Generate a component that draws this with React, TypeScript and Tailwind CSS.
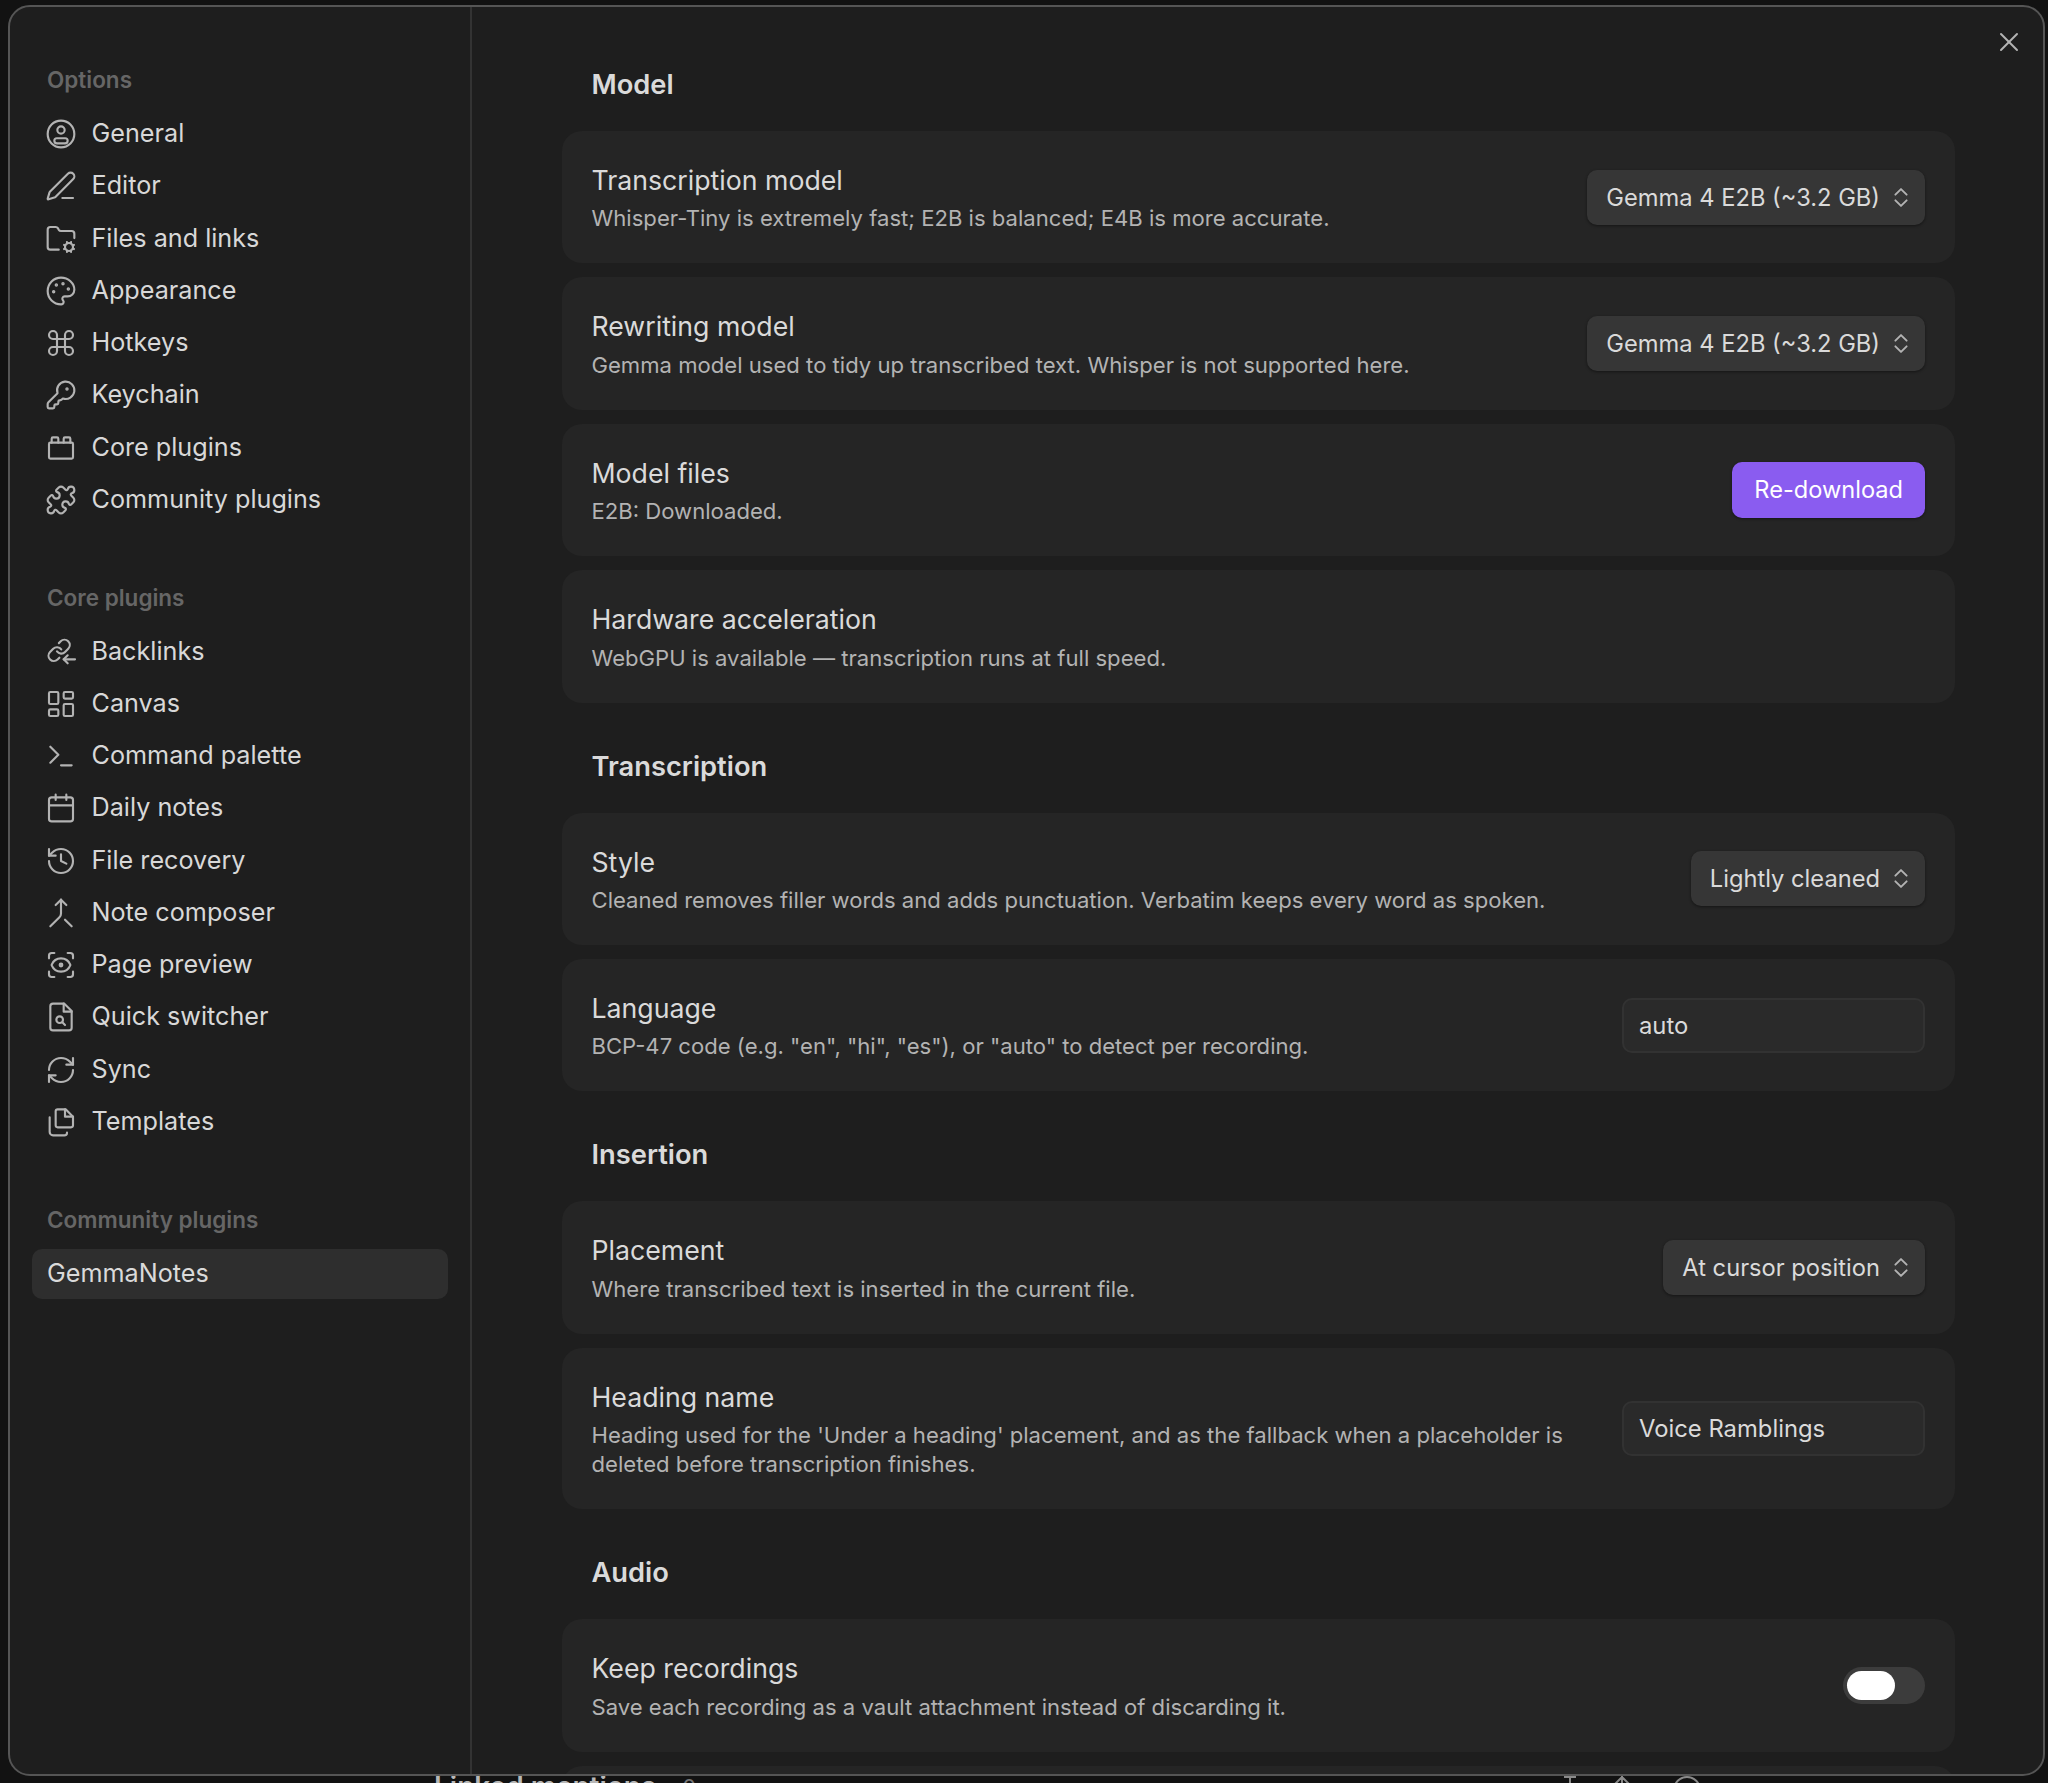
import type { ReactNode } from "react";
import {
  PenLine,
  FolderCog,
  Palette,
  Command,
  KeyRound,
  ToyBrick,
  Puzzle,
  LayoutDashboard,
  Terminal,
  Calendar,
  History,
  Merge,
  ScanEye,
  RefreshCw,
  X,
  type LucideIcon,
} from "lucide-react";

function IconBox({ children }: { children: ReactNode }) {
  return (
    <svg
      viewBox="0 0 24 24"
      fill="none"
      stroke="currentColor"
      strokeWidth={1.6}
      strokeLinecap="round"
      strokeLinejoin="round"
      className="w-[32px] h-[32px] shrink-0"
    >
      {children}
    </svg>
  );
}

const GeneralIcon = () => (
  <IconBox>
    <circle cx="12" cy="12" r="10" />
    <circle cx="12" cy="9" r="2.75" />
    <rect x="7" y="15.2" width="10" height="3.8" rx="1.9" />
  </IconBox>
);

const BacklinksIcon = () => (
  <IconBox>
    <g transform="translate(1 1.2) scale(0.8)" strokeWidth={2}>
      <path d="M10 13a5 5 0 0 0 7.54.54l3-3a5 5 0 0 0-7.07-7.07l-1.72 1.71" />
      <path d="M14 11a5 5 0 0 0-7.54-.54l-3 3a5 5 0 0 0 7.07 7.07l1.71-1.71" />
    </g>
    <path d="M22.5 17.5h-8.5" />
    <path d="M17 14.5l-3 3 3 3" />
  </IconBox>
);

const QuickSwitcherIcon = () => (
  <IconBox>
    <path d="M14.5 2H6a2 2 0 0 0-2 2v16a2 2 0 0 0 2 2h12a2 2 0 0 0 2-2V7.5z" />
    <path d="M14 2v6h6" />
    <circle cx="11" cy="14" r="2.5" />
    <path d="M13 16l2 2" />
  </IconBox>
);

const TemplatesIcon = () => (
  <IconBox>
    <path d="M15.5 2.5H9.5A1.5 1.5 0 0 0 8 4v10.5A1.5 1.5 0 0 0 9.5 16h10a1.5 1.5 0 0 0 1.5-1.5V8z" />
    <path d="M15 2.5V8h6" />
    <path d="M3.5 8.5v11a2.5 2.5 0 0 0 2.5 2.5h8.5a2 2 0 0 0 2-2" />
  </IconBox>
);

function lucide(Icon: LucideIcon) {
  return () => <Icon className="w-[32px] h-[32px] shrink-0" strokeWidth={1.6} />;
}

const optionItems = [
  { label: "General", Icon: GeneralIcon },
  { label: "Editor", Icon: lucide(PenLine) },
  { label: "Files and links", Icon: lucide(FolderCog) },
  { label: "Appearance", Icon: lucide(Palette) },
  { label: "Hotkeys", Icon: lucide(Command) },
  { label: "Keychain", Icon: lucide(KeyRound) },
  { label: "Core plugins", Icon: lucide(ToyBrick) },
  { label: "Community plugins", Icon: lucide(Puzzle) },
];

const coreItems = [
  { label: "Backlinks", Icon: BacklinksIcon },
  { label: "Canvas", Icon: lucide(LayoutDashboard) },
  { label: "Command palette", Icon: lucide(Terminal) },
  { label: "Daily notes", Icon: lucide(Calendar) },
  { label: "File recovery", Icon: lucide(History) },
  { label: "Note composer", Icon: lucide(Merge) },
  { label: "Page preview", Icon: lucide(ScanEye) },
  { label: "Quick switcher", Icon: QuickSwitcherIcon },
  { label: "Sync", Icon: lucide(RefreshCw) },
  { label: "Templates", Icon: TemplatesIcon },
];

function NavLabel({ children }: { children: ReactNode }) {
  return (
    <div className="h-[56px] pl-[37px] pt-[13px] text-[22.5px] leading-[28px] font-semibold text-[#666666]">
      {children}
    </div>
  );
}

function NavItem({ label, Icon }: { label: string; Icon: () => ReactNode }) {
  return (
    <div className="h-[50px] mb-[2.25px] pl-[35px] flex items-center gap-[14.5px] text-[25.2px] text-[#d8d8d8]">
      <span className="text-[#b3b3b3] flex">
        <Icon />
      </span>
      <span>{label}</span>
    </div>
  );
}

function Sidebar() {
  return (
    <aside className="w-[462px] shrink-0 border-r-2 border-[#333333] pt-[46px] h-full">
      <NavLabel>Options</NavLabel>
      {optionItems.map((i) => (
        <NavItem key={i.label} {...i} />
      ))}
      <div className="h-[43.5px]" />
      <NavLabel>Core plugins</NavLabel>
      {coreItems.map((i) => (
        <NavItem key={i.label} {...i} />
      ))}
      <div className="h-[43.5px]" />
      <NavLabel>Community plugins</NavLabel>
      <div className="h-[50px] ml-[22px] w-[416px] pl-[15px] flex items-center rounded-[10px] bg-[#2e2e2e] text-[25.2px] text-[#dadada]">
        GemmaNotes
      </div>
    </aside>
  );
}

function Chevrons() {
  return (
    <svg
      viewBox="0 0 16 24"
      fill="none"
      stroke="#b3b3b3"
      strokeWidth={1.7}
      strokeLinecap="round"
      strokeLinejoin="round"
      className="w-[18px] h-[27px] shrink-0"
    >
      <path d="M3 9.5L8 4.5l5 5" />
      <path d="M3 14.5l5 5 5-5" />
    </svg>
  );
}

function Select({ value }: { value: string }) {
  return (
    <div className="h-[55px] pl-[19px] pr-[15px] flex items-center gap-[12px] rounded-[10px] bg-[#363636] text-[23.7px] text-[#dadada] shadow-[0_1px_3px_rgba(0,0,0,0.45)] whitespace-nowrap">
      <span className="pt-[1px]">{value}</span>
      <Chevrons />
    </div>
  );
}

function TextInput({ value }: { value: string }) {
  return (
    <div className="w-[303px] h-[55px] pl-[15px] flex items-center rounded-[10px] bg-[#2a2a2a] border-2 border-[#323232] text-[23.8px] text-[#dadada]">
      <span className="pt-[1px]">{value}</span>
    </div>
  );
}

function Toggle() {
  return (
    <div className="w-[82px] h-[37px] rounded-full bg-[#3c3c3c] p-[4px] flex">
      <div className="w-[48px] h-[29px] rounded-full bg-white" />
    </div>
  );
}

function SettingCard({
  title,
  desc,
  children,
}: {
  title: string;
  desc: string;
  children?: ReactNode;
}) {
  return (
    <div className="mb-[14px] pl-[29.5px] pr-[30px] py-[30px] rounded-[20px] bg-[#252525] flex items-center justify-between gap-[40px]">
      <div className="min-w-0">
        <div className="text-[26.7px] leading-[38px] text-[#dadada]">{title}</div>
        <div className="mt-[5.4px] text-[22.1px] leading-[29px] text-[#b3b3b3]">{desc}</div>
      </div>
      {children && <div className="shrink-0">{children}</div>}
    </div>
  );
}

function SectionHeading({ children, first }: { children: ReactNode; first?: boolean }) {
  return (
    <h2
      className={`${first ? "pt-[60px]" : "pt-[32px]"} pl-[29.5px] pb-[28px] text-[27.3px] leading-[36px] font-semibold text-[#dadada]`}
    >
      {children}
    </h2>
  );
}

export default function App() {
  return (
    <div
      className="h-[1783px] overflow-hidden bg-[#121212] pt-[5px] pl-[8px] pr-[3px]"
      style={{ fontFamily: "Inter, 'Liberation Sans', sans-serif" }}
    >
      <div className="relative h-[1771px] flex overflow-hidden rounded-[22px] border-2 border-[#555555] bg-[#1e1e1e]">
        <Sidebar />
        <main className="flex-1 min-w-0 pl-[90px] pr-[88px] overflow-hidden">
          <SectionHeading first>Model</SectionHeading>
          <SettingCard
            title="Transcription model"
            desc="Whisper-Tiny is extremely fast; E2B is balanced; E4B is more accurate."
          >
            <Select value="Gemma 4 E2B (~3.2 GB)" />
          </SettingCard>
          <SettingCard
            title="Rewriting model"
            desc="Gemma model used to tidy up transcribed text. Whisper is not supported here."
          >
            <Select value="Gemma 4 E2B (~3.2 GB)" />
          </SettingCard>
          <SettingCard title="Model files" desc="E2B: Downloaded.">
            <div className="h-[56px] px-[22px] flex items-center rounded-[10px] bg-[#8a5cf0] text-[23.6px] text-white shadow-[0_1px_3px_rgba(0,0,0,0.45)]">
              Re-download
            </div>
          </SettingCard>
          <SettingCard
            title="Hardware acceleration"
            desc="WebGPU is available — transcription runs at full speed."
          />
          <SectionHeading>Transcription</SectionHeading>
          <SettingCard
            title="Style"
            desc="Cleaned removes filler words and adds punctuation. Verbatim keeps every word as spoken."
          >
            <Select value="Lightly cleaned" />
          </SettingCard>
          <SettingCard
            title="Language"
            desc={'BCP-47 code (e.g. "en", "hi", "es"), or "auto" to detect per recording.'}
          >
            <TextInput value="auto" />
          </SettingCard>
          <SectionHeading>Insertion</SectionHeading>
          <SettingCard title="Placement" desc="Where transcribed text is inserted in the current file.">
            <Select value="At cursor position" />
          </SettingCard>
          <SettingCard
            title="Heading name"
            desc="Heading used for the 'Under a heading' placement, and as the fallback when a placeholder is deleted before transcription finishes."
          >
            <TextInput value="Voice Ramblings" />
          </SettingCard>
          <SectionHeading>Audio</SectionHeading>
          <SettingCard
            title="Keep recordings"
            desc="Save each recording as a vault attachment instead of discarding it."
          >
            <Toggle />
          </SettingCard>
          <div className="h-[40px] rounded-t-[20px] bg-[#252525]" />
        </main>
        <button className="absolute top-[19px] right-[18px] text-[#b3b3b3]">
          <X className="w-[32px] h-[32px]" strokeWidth={1.5} />
        </button>
      </div>
      <div className="flex items-start pl-[426px] pr-[344px] text-[#b8b8b8]">
        <div className="text-[28px] leading-[36px] font-semibold -mt-[7px]">Linked mentions</div>
        <div className="ml-[26px] text-[22px] leading-[30px] -mt-[4px] text-[#777777]">0</div>
        <div className="ml-auto flex gap-[32px] text-[#8a8a8a]">
          <svg viewBox="0 0 20 20" fill="none" stroke="currentColor" strokeWidth={2} className="w-[20px] h-[20px]">
            <path d="M10 0v20M4 1h12" />
          </svg>
          <svg viewBox="0 0 20 20" fill="none" stroke="currentColor" strokeWidth={2} className="w-[20px] h-[20px]">
            <path d="M10 0v20M3 8l7-7 7 7" />
          </svg>
          <svg viewBox="0 0 28 28" fill="none" stroke="currentColor" strokeWidth={2} className="ml-[9px] w-[28px] h-[28px]">
            <circle cx="14" cy="14" r="13" />
          </svg>
        </div>
      </div>
    </div>
  );
}
